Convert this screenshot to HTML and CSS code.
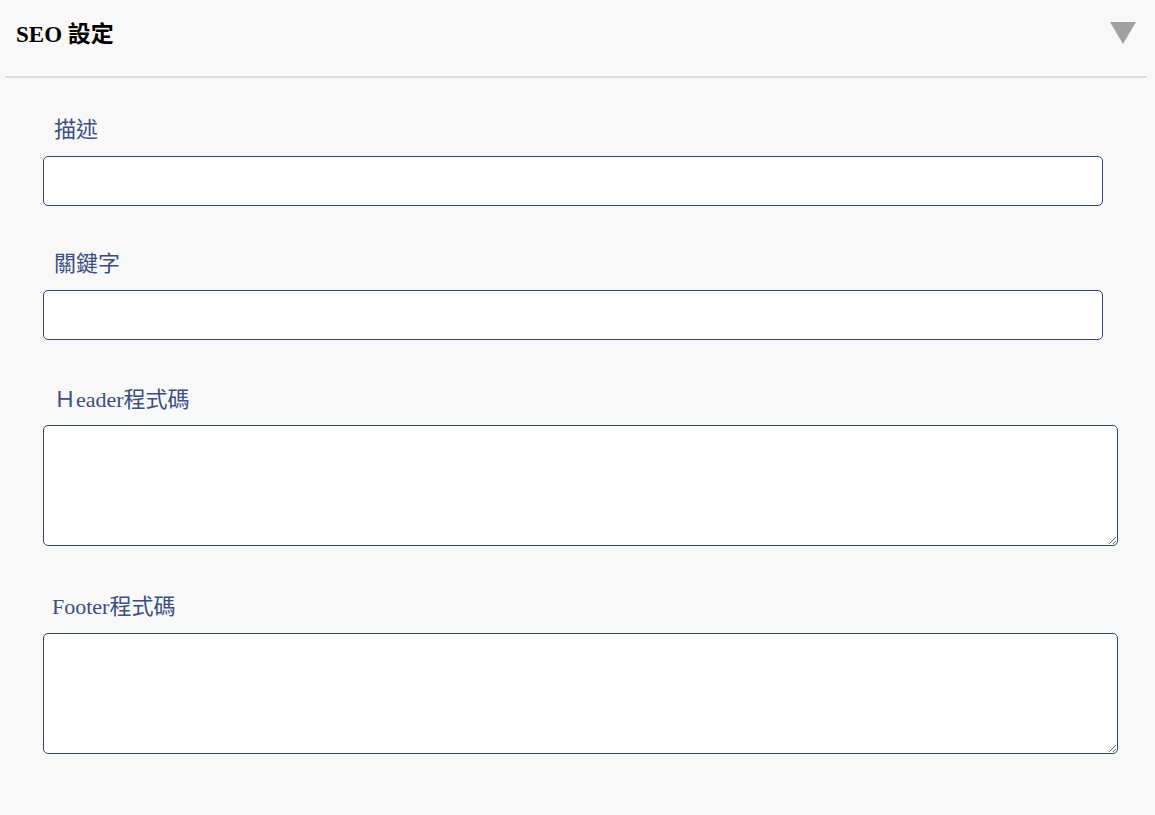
FILE: index.html
```html
<!DOCTYPE html>
<html lang="zh-Hant">
<head>
<meta charset="utf-8">
<title>SEO 設定</title>
<link rel="stylesheet" href="styles.css">
</head>
<body>
<section class="panel">
  <div class="panel-head">
    <h2 class="panel-title">SEO 設定</h2>
    <svg class="caret" width="26" height="22" viewBox="0 0 26 22" aria-hidden="true"><polygon points="0,0 26,0 13,22" fill="#a0a0a0"/></svg>
  </div>
  <div class="divider"></div>
  <form class="panel-body">
    <div class="field">
      <label class="field-label" for="desc">描述</label>
      <input class="field-input" id="desc" type="text">
    </div>
    <div class="field">
      <label class="field-label" for="kw">關鍵字</label>
      <input class="field-input" id="kw" type="text">
    </div>
    <div class="field field--area">
      <label class="field-label field-label--low" for="hdr">Ｈeader程式碼</label>
      <textarea class="field-area" id="hdr"></textarea>
    </div>
    <div class="field field--area-last">
      <label class="field-label field-label--tight" for="ftr">Footer程式碼</label>
      <textarea class="field-area" id="ftr"></textarea>
    </div>
  </form>
</section>
</body>
</html>
```

FILE: styles.css
```css
html, body {
  margin: 0;
  padding: 0;
  background: #f8f8f8;
}

body {
  font-family: "Liberation Serif", "Noto Sans CJK TC", serif;
  width: 1155px;
  height: 815px;
  overflow: hidden;
}

.panel-head {
  height: 76px;
  display: flex;
  align-items: center;
  justify-content: space-between;
  padding: 0 19px 0 16px;
  box-sizing: border-box;
}

.panel-title {
  margin: 0;
  font-size: 23px;
  font-weight: 700;
  color: #000;
  font-family: "Liberation Serif", "Noto Sans CJK TC", serif;
  position: relative;
  top: -6px;
}

.caret {
  display: block;
  position: relative;
  top: -5px;
}

.divider {
  height: 2px;
  background: #dcdcdc;
  margin: 0 8px 0 5px;
}

.panel-body {
  padding: 40px 0 0 43px;
  display: flex;
  flex-direction: column;
  gap: 46px;
}

.field {
  display: flex;
  flex-direction: column;
}

.field--area {
  margin-top: 1px;
}

.field--area-last {
  margin-top: 3px;
}

.field-label {
  font-size: 22px;
  line-height: 24px;
  color: #3b4f80;
  padding-left: 11px;
  margin-bottom: 14px;
}

.field-label--low {
  position: relative;
  top: 1px;
}

.field-label--tight {
  padding-left: 9px;
}

.field-input,
.field-area {
  display: block;
  box-sizing: border-box;
  border: 1px solid #2e4473;
  border-radius: 5px;
  background: #fff;
  margin: 0;
  font: inherit;
}

.field-input {
  width: 1060px;
  height: 50px;
}

.field-area {
  width: 1075px;
  height: 121px;
  resize: vertical;
}
```
